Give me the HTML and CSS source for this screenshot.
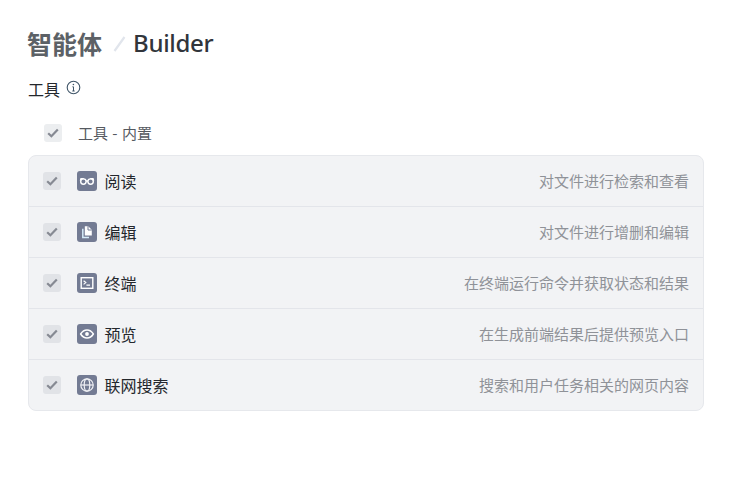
FILE: index.html
```html
<!DOCTYPE html>
<html lang="zh-CN">
<head>
<meta charset="utf-8">
<title>智能体 / Builder</title>
<link rel="stylesheet" href="styles.css">
</head>
<body>
<main class="page">
  <header class="crumbs">
    <span class="crumb-parent">智能体</span>
    <svg class="crumb-sep" width="14" height="18" viewBox="0 0 14 18"><path d="M1.5 17 L11.5 3" stroke="#e1e5ec" stroke-width="2.2" fill="none"/></svg>
    <span class="crumb-current">Builder</span>
  </header>
  <div class="section-label">
    <span>工具</span>
    <svg class="info" width="15" height="15" viewBox="0 0 15 15"><circle cx="7.5" cy="7.5" r="6.3" fill="none" stroke="#3f5568" stroke-width="1.1"/><path d="M7.5 6.8V11M6.3 11h2.4M6.4 6.8h1.1" fill="none" stroke="#3f5568" stroke-width="1"/><circle cx="7.4" cy="4.5" r=".8" fill="#3f5568"/></svg>
  </div>
  <div class="group-head">
    <span class="check head-check"><svg width="12" height="10" viewBox="0 0 12 10"><path d="M1.2 5.2 4.4 8.3 10.8 1.6" fill="none" stroke="#868a93" stroke-width="2.2"/></svg></span>
    <span class="group-name">工具 - 内置</span>
  </div>
  <ul class="tools">
    <li class="tool">
      <span class="check"><svg width="12" height="10" viewBox="0 0 12 10"><path d="M1.2 5.2 4.4 8.3 10.8 1.6" fill="none" stroke="#868a93" stroke-width="2.2"/></svg></span>
      <span class="tool-icon"><svg width="20" height="20" viewBox="0 0 20 20"><g fill="none" stroke="#fff" stroke-width="1.4"><circle cx="6.4" cy="10.6" r="2.7"/><circle cx="13.6" cy="10.6" r="2.7"/><path d="M9 10h2M3.4 9.6 4 7.6h2.8M16.6 9.6l-.6-2h-2.8"/></g></svg></span>
      <span class="tool-name">阅读</span>
      <span class="tool-desc">对文件进行检索和查看</span>
    </li>
    <li class="tool">
      <span class="check"><svg width="12" height="10" viewBox="0 0 12 10"><path d="M1.2 5.2 4.4 8.3 10.8 1.6" fill="none" stroke="#868a93" stroke-width="2.2"/></svg></span>
      <span class="tool-icon"><svg width="20" height="20" viewBox="0 0 20 20"><path d="M7.8 4.2h3.4L14.8 7.8V13.6H7.8Z" fill="#fff"/><path d="M11 4.2v3.8h3.8" fill="none" stroke="#737b93" stroke-width="1"/><path d="M5.8 6.8V15.6H12" fill="none" stroke="#d6ecfa" stroke-width="1.5"/></svg></span>
      <span class="tool-name">编辑</span>
      <span class="tool-desc">对文件进行增删和编辑</span>
    </li>
    <li class="tool">
      <span class="check"><svg width="12" height="10" viewBox="0 0 12 10"><path d="M1.2 5.2 4.4 8.3 10.8 1.6" fill="none" stroke="#868a93" stroke-width="2.2"/></svg></span>
      <span class="tool-icon"><svg width="20" height="20" viewBox="0 0 20 20"><rect x="4.2" y="4.7" width="11.6" height="10.6" fill="none" stroke="#fff" stroke-width="1.4"/><path d="M6.6 7.8 8.8 9.6 6.6 11.4M9.4 12.2h3.6" fill="none" stroke="#fff" stroke-width="1.2"/></svg></span>
      <span class="tool-name">终端</span>
      <span class="tool-desc">在终端运行命令并获取状态和结果</span>
    </li>
    <li class="tool">
      <span class="check"><svg width="12" height="10" viewBox="0 0 12 10"><path d="M1.2 5.2 4.4 8.3 10.8 1.6" fill="none" stroke="#868a93" stroke-width="2.2"/></svg></span>
      <span class="tool-icon"><svg width="20" height="20" viewBox="0 0 20 20"><path d="M3.6 10C5.4 7.2 7.6 6 10 6S14.6 7.2 16.4 10C14.6 12.8 12.4 14 10 14S5.4 12.8 3.6 10Z" fill="none" stroke="#fff" stroke-width="1.4"/><circle cx="10" cy="10" r="1.9" fill="#fff"/></svg></span>
      <span class="tool-name">预览</span>
      <span class="tool-desc">在生成前端结果后提供预览入口</span>
    </li>
    <li class="tool">
      <span class="check"><svg width="12" height="10" viewBox="0 0 12 10"><path d="M1.2 5.2 4.4 8.3 10.8 1.6" fill="none" stroke="#868a93" stroke-width="2.2"/></svg></span>
      <span class="tool-icon"><svg width="20" height="20" viewBox="0 0 20 20"><g fill="none" stroke="#f0f1f5" stroke-width="1.2"><circle cx="10" cy="10" r="6.2"/><ellipse cx="10" cy="10" rx="2.8" ry="6.2"/><path d="M3.8 10h12.4"/></g></svg></span>
      <span class="tool-name">联网搜索</span>
      <span class="tool-desc">搜索和用户任务相关的网页内容</span>
    </li>
  </ul>
</main>
</body>
</html>
```
FILE: styles.css
```css
* { box-sizing: border-box; }
html, body { margin: 0; padding: 0; background: #fff; }
body { font-family: "Noto Sans CJK SC", "Noto Sans", sans-serif; }
.page { width: 704px; padding: 25px 0 0 27px; }
.crumbs { display: flex; align-items: center; height: 36px; font-size: 25px; line-height: 36px; font-weight: 500; }
.crumb-parent { color: #5c6166; font-weight: 700; }
.crumb-sep { margin: 0 6px 0 11px; }
.crumb-current { color: #31353b; font-family: "Noto Sans", sans-serif; font-size: 24px; font-weight: 500; letter-spacing: -0.3px; }
.section-label { display: flex; align-items: flex-start; gap: 6px; margin-top: 17px; height: 22px; padding-left: 1px; font-size: 16px; line-height: 22px; color: #24272c; }
.info { margin-top: 2px; }
.group-head { display: flex; align-items: center; height: 22px; margin-top: 22px; padding-left: 17px; font-size: 15px; line-height: 22px; color: #55595f; }
.group-name { margin-left: 16px; word-spacing: 1px; }
.check { display: flex; align-items: center; justify-content: center; width: 18px; height: 18px; border-radius: 3px; background: #e1e3e7; flex: none; }
.head-check { background: #eceef0; }
.tools { list-style: none; margin: 11px 0 0 1px; padding: 0; border: 1px solid #e6e8ec; border-radius: 8px; background: #f2f3f5; }
.tool { display: flex; align-items: center; height: 51px; padding: 0 14px; border-top: 1px solid #e3e5ea; }
.tool:first-child { border-top: 0; height: 50px; }
.tool-icon { display: flex; align-items: center; justify-content: center; width: 20px; height: 20px; margin-left: 16px; border-radius: 3px; background: #737b93; flex: none; }
.tool-name { margin-left: 7.5px; font-size: 16px; line-height: 24px; color: #24272c; }
.tool-desc { margin-left: auto; font-size: 15px; line-height: 22px; color: #8f9298; }
```
